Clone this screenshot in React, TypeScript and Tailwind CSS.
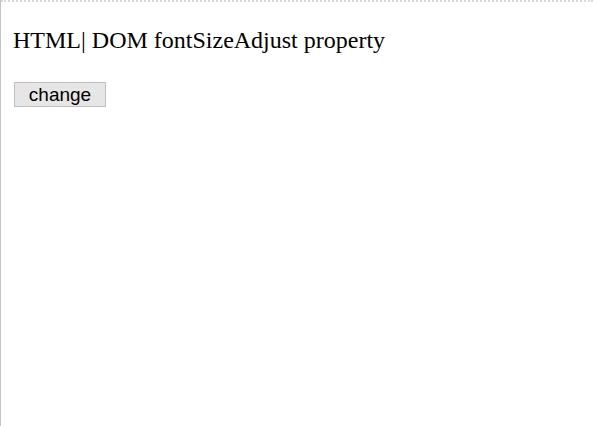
export default function App() {
  return (
    <div className="w-[593px] h-[426px] bg-white border-l border-solid border-l-[#c4c4c4] box-border overflow-hidden">
      <div className="h-[2px] border-t-2 border-dotted border-t-[#d8d8d8]" />
      <div className="pl-[12px] pt-[25px]" style={{ fontFamily: '"Liberation Serif", serif' }}>
        <p className="text-[24px] leading-[27px] text-black">HTML| DOM fontSizeAdjust property</p>
        <button
          className="mt-[28px] ml-[1px] w-[92px] h-[25px] bg-[#e6e6e6] border border-solid border-[#c0c0c0] text-[19px] leading-[20px] text-black flex items-center justify-center"
          style={{ fontFamily: '"Liberation Sans", sans-serif' }}
        >
          change
        </button>
      </div>
    </div>
  );
}
